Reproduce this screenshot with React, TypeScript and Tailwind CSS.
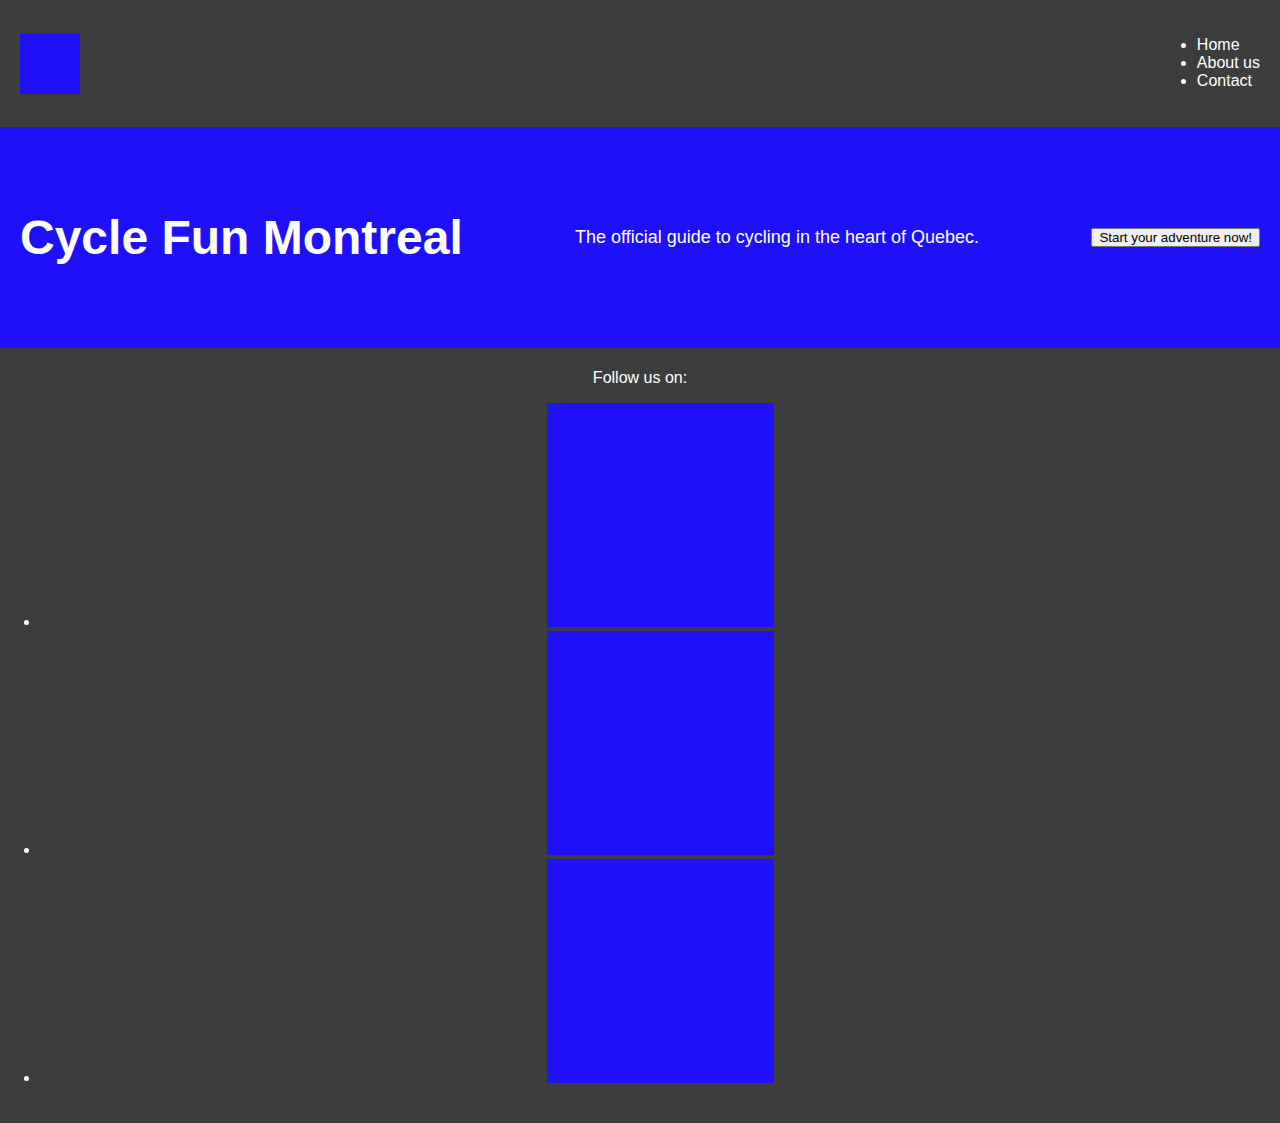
export default function App() {
  return (
    <div className="font-['Liberation_Sans',Arial,sans-serif] leading-[normal] text-white bg-[#3c3d3c] min-h-[1123px]">
      <header className="flex items-center justify-between px-[20px] h-[127px] bg-[#3c3d3c]">
        <div className="w-[60px] h-[60px] bg-[#1e10f8]" />
        <nav>
          <ul className="list-disc pl-[40px] mt-[15px] mb-[17px] text-[16px]">
            <li>Home</li>
            <li>About us</li>
            <li>Contact</li>
          </ul>
        </nav>
      </header>
      <section className="flex items-center justify-between px-[20px] h-[221px] bg-[#1e10f8]">
        <h1 className="text-[48px] font-bold">Cycle Fun Montreal</h1>
        <p className="text-[18px]">The official guide to cycling in the heart of Quebec.</p>
        <button className="bg-[#efefef] text-black text-[13.333px] px-[7px] py-[1px] border border-[#767676] rounded-[2px] leading-[normal]">
          Start your adventure now!
        </button>
      </section>
      <footer className="pt-[21px] pb-[20px] text-center">
        <p className="text-[16px]">Follow us on:</p>
        <ul className="list-disc pl-[40px] mt-[16px] mb-[15px]">
          <li>
            <span className="inline-block w-[227px] h-[224px] bg-[#1e10f8] align-baseline" />
          </li>
          <li>
            <span className="inline-block w-[227px] h-[224px] bg-[#1e10f8] align-baseline" />
          </li>
          <li>
            <span className="inline-block w-[227px] h-[224px] bg-[#1e10f8] align-baseline" />
          </li>
        </ul>
      </footer>
    </div>
  );
}
